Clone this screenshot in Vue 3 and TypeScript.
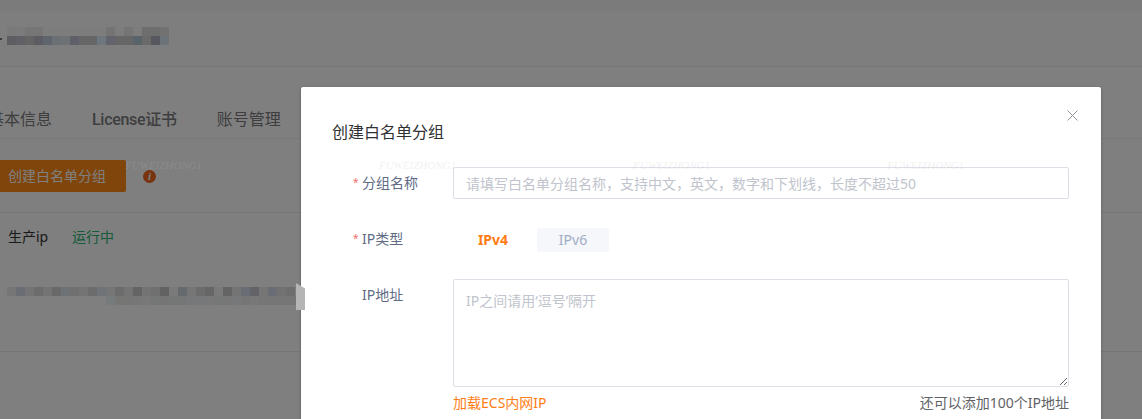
<script setup lang="ts">
const headTop: (string | null)[] = [
  '#7a7a7a', '#7b7b7b', '#767676', '#767676', '#7d7d7d', '#7d7d7d', '#7d7d7d', '#7d7d7d', '#7d7d7d', '#7d7d7d', '#7d7d7d',
  '#747474', '#7d7d7d', '#757575', '#7d7d7d', '#6e6e6e', '#6e6e6e', '#727272',
]
const headMain = [
  '#5d5d62', '#606066', '#646465', '#5c5c63', '#5f656c', '#6a7074', '#6e7274', '#5f5f69', '#666666',
  '#666666', '#6e767e', '#63636b', '#666666', '#666666', '#59636a', '#6a6a6a', '#57575f', '#6c747a',
]
const rowMain = [
  '#767676', '#6a6e74', '#747474', '#6c6c6c', '#747474', '#696969', '#6e7276', '#707070', '#747474', '#6c6c6c',
  '#707478', '#767676', '#6c6c6c', '#747474', '#646464', '#747474', '#707070', '#626262', '#7a7a7a', '#666a6e',
  '#767676', '#6c6c6c', '#666666', '#7a7a7a', '#646464', '#747474', '#6a6e74', '#646468', '#767676', '#6a6e74',
  '#727272', '#6e6e6e',
]
const rowSub = [
  '#787b7c', '#767674', '#767676', '#777777', '#787878', '#757777', '#757575', '#757777', '#757777', '#76787a',
  '#76787a', '#787878', '#767878', '#777777', '#76787a', '#767676', '#787878', '#767676', '#767676', '#767676',
  '#767676', '#767676',
]
const marks = ['FUWEIZHONG1', 'FUWEIZHONG1', 'FUWEIZHONG1', 'FUWEIZHONG1']
</script>

<template>
  <div class="screen">
    <div class="page">
      <div class="strip"></div>
      <header class="head">
        <span class="tick"></span>
        <div class="mosaic">
          <div class="cells">
            <i v-for="(c, n) in headTop" :key="n" class="cell" :style="{ background: c ?? 'transparent' }"></i>
          </div>
          <div class="cells">
            <i v-for="(c, n) in headMain" :key="n" class="cell" :style="{ background: c }"></i>
          </div>
        </div>
      </header>
      <nav class="tabs">
        <span class="tab">基本信息</span>
        <span class="tab strong">License证书</span>
        <span class="tab">账号管理</span>
      </nav>
      <div class="toolbar">
        <button class="create" type="button">创建白名单分组</button>
        <span class="info">i</span>
      </div>
      <section class="row">
        <div class="row-line">
          <span class="name">生产ip</span>
          <span class="state">运行中</span>
        </div>
        <div class="row-mosaic">
          <div class="cells">
            <i v-for="(c, n) in rowMain" :key="n" class="cell" :style="{ background: c }"></i>
          </div>
          <div class="cells sub">
            <i v-for="(c, n) in rowSub" :key="n" class="cell" :style="{ background: c }"></i>
          </div>
        </div>
      </section>
    </div>

    <div class="dim"></div>

    <div class="modal">
      <svg class="close" viewBox="0 0 11 11" width="11" height="11" aria-hidden="true">
        <path d="M0.5 0.5 L10.5 10.5 M10.5 0.5 L0.5 10.5" stroke="#909399" stroke-width="1" fill="none" />
      </svg>
      <h2 class="title">创建白名单分组</h2>
      <form class="form" @submit.prevent>
        <div class="field first">
          <label class="label"><span class="star">*</span>分组名称</label>
          <input class="input" type="text" placeholder="请填写白名单分组名称，支持中文，英文，数字和下划线，长度不超过50" />
        </div>
        <div class="field second">
          <label class="label"><span class="star">*</span>IP类型</label>
          <div class="pills">
            <span class="pill on">IPv4</span>
            <span class="pill">IPv6</span>
          </div>
        </div>
        <div class="field third">
          <label class="label"><span class="star none"></span>IP地址</label>
          <div class="area-wrap">
            <textarea class="area" placeholder="IP之间请用‘逗号’隔开"></textarea>
            <div class="area-foot">
              <a class="load">加载ECS内网IP</a>
              <span class="left">还可以添加100个IP地址</span>
            </div>
          </div>
        </div>
      </form>
    </div>

    <div class="marks">
      <span v-for="(m, n) in marks" :key="n" class="mark">{{ m }}</span>
    </div>
    <div class="patch"></div>
  </div>
</template>

<style scoped>
.screen {
  position: relative;
  width: 1142px;
  height: 419px;
  overflow: hidden;
  background: #ffffff;
  font-family: "Noto Sans", "Noto Sans CJK SC", sans-serif;
  font-size: 14px;
}
.page {
  display: flex;
  flex-direction: column;
}
.strip {
  height: 12px;
  box-sizing: border-box;
  background: #f6f6f6;
  border-bottom: 1px solid #f8f8f8;
}
.head {
  height: 55px;
  box-sizing: border-box;
  border-bottom: 1px solid #ececec;
  background: #fbfcfb;
  display: flex;
  align-items: flex-start;
  padding-top: 15px;
}
.tick {
  width: 2px;
  height: 2px;
  margin: 11px 5px 0 0;
  background: #777777;
}
.mosaic {
  filter: brightness(2);
}
.cells {
  display: flex;
}
.cell {
  display: block;
  width: 9px;
  height: 9px;
}
.tabs {
  height: 72px;
  box-sizing: border-box;
  border-bottom: 1px solid #f0f0f0;
  display: flex;
  align-items: center;
  gap: 40px;
  margin-left: -12px;
  padding-top: 42px;
  padding-bottom: 7px;
  font-family: Roboto, "Noto Sans CJK SC", sans-serif;
  font-size: 16px;
  color: #7c7c80;
}
.tab {
  line-height: 24px;
}
.strong {
  font-weight: 500;
  letter-spacing: -0.3px;
}
.toolbar {
  height: 74px;
  box-sizing: border-box;
  border-bottom: 1px solid #ececec;
  display: flex;
  align-items: flex-start;
  padding-top: 21px;
  margin-left: -12px;
}
.create {
  width: 138px;
  height: 32px;
  border: 0;
  border-radius: 2px;
  background: #ff8a14;
  color: #ffffff;
  font: inherit;
  font-size: 14px;
  padding: 0 0 2px;
}
.info {
  width: 13px;
  height: 13px;
  border-radius: 50%;
  margin: 10px 0 0 17px;
  background: #f0681e;
  color: #ffffff;
  font-family: "Liberation Serif", serif;
  font-style: italic;
  font-weight: 700;
  font-size: 11px;
  line-height: 13px;
  text-align: center;
}
.row {
  height: 139px;
  box-sizing: border-box;
  border-bottom: 1px solid #ececec;
  padding: 12px 0 0 8px;
}
.row-line {
  display: flex;
  align-items: center;
  height: 21px;
}
.name {
  width: 64px;
  color: #333333;
}
.state {
  color: #2bb673;
}
.row-mosaic {
  margin: 41px 0 0 -1px;
  filter: brightness(2);
}
.sub {
  margin-left: 99px;
}
.dim {
  position: absolute;
  inset: 0;
  background: rgba(0, 0, 0, 0.5);
}
.modal {
  position: absolute;
  left: 301px;
  top: 87px;
  width: 800px;
  height: 420px;
  box-sizing: border-box;
  padding: 33px 32px 0 31px;
  background: #ffffff;
  border-radius: 2px;
  box-shadow: 0 1px 3px rgba(0, 0, 0, 0.3);
}
.close {
  position: absolute;
  top: 23px;
  right: 23px;
}
.title {
  margin: 0;
  font-size: 16px;
  font-weight: 400;
  line-height: 24px;
  color: #303133;
}
.form {
  display: flex;
  flex-direction: column;
}
.field {
  display: flex;
  align-items: flex-start;
}
.first {
  margin-top: 23px;
}
.second {
  margin-top: 25px;
  min-height: 32px;
}
.second .label {
  line-height: 30px;
}
.third {
  margin-top: 23px;
}
.label {
  width: 121px;
  flex: none;
  display: flex;
  box-sizing: border-box;
  padding-left: 21px;
  line-height: 32px;
  color: #606a85;
}
.star {
  width: 9px;
  font-family: "Liberation Sans", sans-serif;
  color: #f56c6c;
}
.input {
  flex: 1;
  height: 32px;
  box-sizing: border-box;
  border: 1px solid #dcdfe6;
  border-radius: 2px;
  padding: 0 12px;
  outline: none;
  font: inherit;
  color: #606266;
}
.input::placeholder,
.area::placeholder {
  color: #c0c4cc;
  opacity: 1;
}
.pills {
  display: flex;
  gap: 8px;
  margin: 4px 0 0 4px;
}
.pill {
  width: 72px;
  height: 24px;
  border-radius: 2px;
  background: #f5f7fb;
  color: #a3abc4;
  line-height: 24px;
  text-align: center;
}
.pill.on {
  background: transparent;
  color: #ff7d14;
  font-weight: 700;
}
.area-wrap {
  flex: 1;
}
.area {
  display: block;
  width: 100%;
  height: 108px;
  box-sizing: border-box;
  border: 1px solid #dcdfe6;
  border-radius: 2px;
  padding: 11px 12px;
  outline: none;
  font: inherit;
  line-height: 20px;
  resize: vertical;
}
.area-foot {
  display: flex;
  justify-content: space-between;
  margin-top: 5px;
  line-height: 21px;
}
.load {
  color: #ff7d14;
}
.left {
  color: #606266;
}
.marks {
  position: absolute;
  left: 125px;
  top: 158px;
  display: flex;
  gap: 178px;
  pointer-events: none;
}
.mark {
  width: 76px;
  font-family: "Liberation Serif", serif;
  font-style: italic;
  font-size: 11px;
  line-height: 14px;
  white-space: nowrap;
  color: rgba(190, 190, 190, 0.22);
}
.patch {
  position: absolute;
  left: 296px;
  top: 283px;
  width: 9px;
  height: 27px;
  background: #b5b5b5;
  clip-path: polygon(0 0, 100% 20%, 100% 100%, 0 100%);
}
</style>
